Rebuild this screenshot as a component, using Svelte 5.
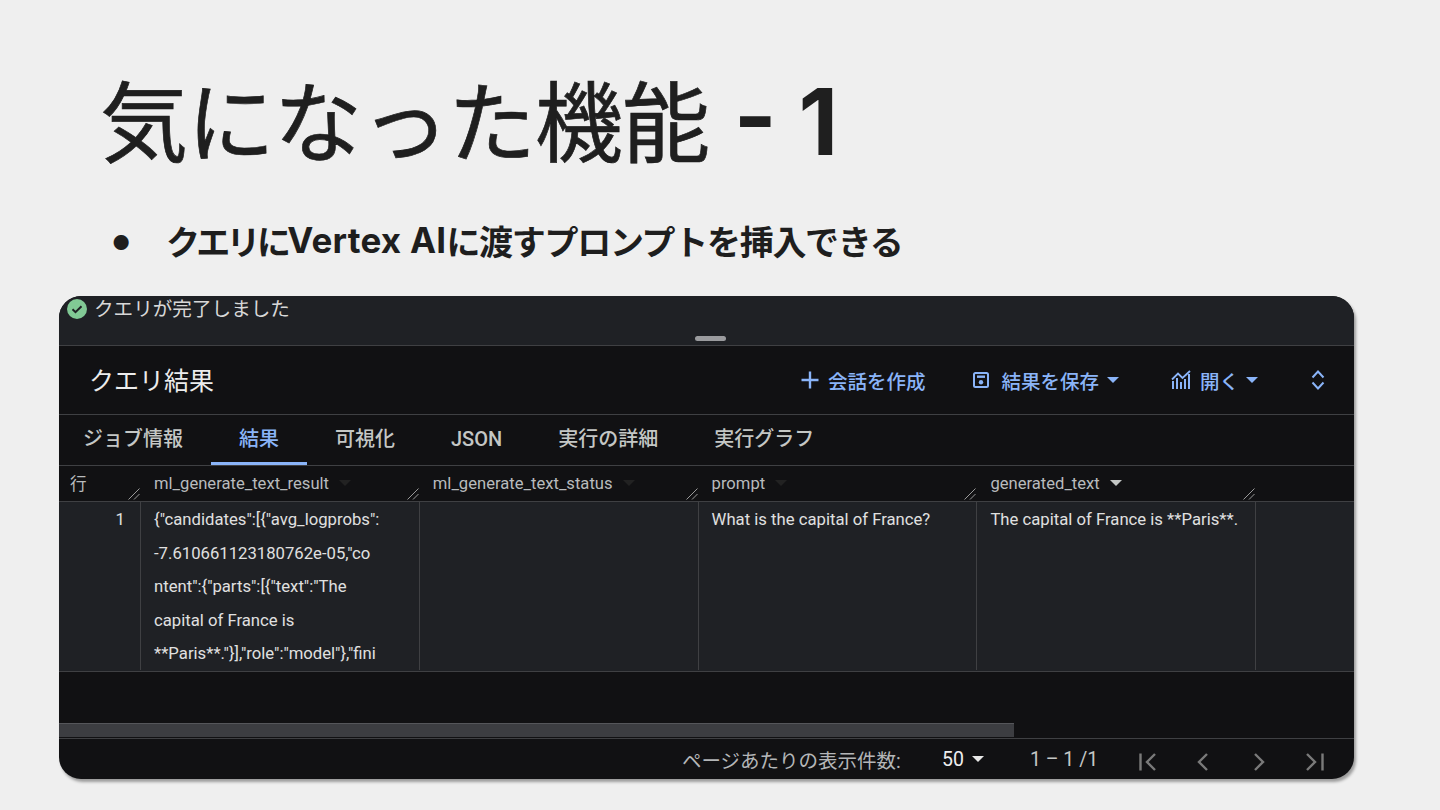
<script>
  const tabs = ['ジョブ情報', '結果', '可視化', 'JSON', '実行の詳細', '実行グラフ'];
  const cols = [
    { name: 'ml_generate_text_result', dim: true },
    { name: 'ml_generate_text_status', dim: true },
    { name: 'prompt', dim: true },
    { name: 'generated_text', dim: false }
  ];
</script>

{#snippet handle()}
  <svg class="resize" viewBox="0 0 12 12" width="12" height="12"><path d="M.5 11.500L11.500.5M6 11.500l5.500-5.500" stroke="#9a9a9a" stroke-width="1" fill="none"/></svg>
{/snippet}

<div class="slide">
  <h1><span class="jp">気になった機能</span> <span class="num1">- 1</span></h1>
  <div class="bullet"><span class="dot">●</span><span class="b1">クエリに</span><span class="b2">Vertex AI</span><span class="b3">に渡すプロンプトを挿入できる</span></div>

  <div class="card">
    <div class="status">
      <div class="statusline">
        <svg class="check" viewBox="0 0 20 20" width="20" height="20"><circle cx="10" cy="10" r="10" fill="#81c995"/><path d="M5.500 10.200l3 3 6-6" fill="none" stroke="#1f2125" stroke-width="2"/></svg>
        <span class="stext">クエリが完了しました</span>
      </div>
      <div class="grip"></div>
    </div>

    <div class="head">
      <div class="htitle">クエリ結果</div>
      <div class="actions">
        <div class="act a1">
          <svg viewBox="0 0 18 18" width="18" height="18"><path d="M9 .5v17M.5 9h17" stroke="#8ab4f8" stroke-width="2.400" fill="none"/></svg>
          <span>会話を作成</span>
        </div>
        <div class="act a2">
          <svg viewBox="0 0 18 18" width="18" height="18"><rect x="2" y="2" width="14" height="14" rx="1.500" fill="none" stroke="#8ab4f8" stroke-width="2"/><rect x="5" y="4.500" width="8" height="2.400" fill="#8ab4f8"/><circle cx="9" cy="11.300" r="2.200" fill="#8ab4f8"/></svg>
          <span>結果を保存</span><i class="caret blue"></i>
        </div>
        <div class="act a3">
          <svg viewBox="0 0 21 20" width="21" height="20"><path d="M2 19v-8M6 19V8M10 19v-7M14 19V9M18 19V4" stroke="#8ab4f8" stroke-width="2" fill="none"/><path d="M1 9.500L7 3.500l4.500 4.500L19 1" stroke="#8ab4f8" stroke-width="1.800" fill="none"/></svg>
          <span>開く</span><i class="caret blue"></i>
        </div>
        <svg class="expand" viewBox="0 0 14 24" width="14" height="24"><path d="M1.500 9.500L7 3.500l5.500 6M1.500 14.500L7 20.500l5.500-6" stroke="#8ab4f8" stroke-width="2" fill="none"/></svg>
      </div>
    </div>

    <div class="tabs">
      {#each tabs as t, i}
        <div class="tab" class:active={i === 1}>{t}</div>
      {/each}
    </div>

    <div class="thead">
      <div class="th first"><span class="rowlabel">行</span>{@render handle()}</div>
      {#each cols as c}
        <div class="th col">
          <span>{c.name}</span><i class="caret" class:dim={c.dim}></i>
          {@render handle()}
        </div>
      {/each}
    </div>

    <div class="trow">
      <div class="td first num">1</div>
      <div class="td col json">
        <div>{'{"candidates":[{"avg_logprobs":'}</div>
        <div>-7.610661123180762e-05,"co</div>
        <div>{'ntent":{"parts":[{"text":"The'}</div>
        <div>capital of France is</div>
        <div>{'**Paris**."}],"role":"model"},"fini'}</div>
      </div>
      <div class="td col"></div>
      <div class="td col cell">What is the capital of France?</div>
      <div class="td col cell">The capital of France is **Paris**.</div>
    </div>

    <div class="spacer"></div>
    <div class="scroll"><div class="thumb"></div></div>

    <div class="foot">
      <span class="perpage">ページあたりの表示件数:</span>
      <span class="size">50</span><i class="caret white"></i>
      <span class="range">1 – 1 /1</span>
      <svg viewBox="0 0 20 20" width="20" height="20" class="pg p1"><path d="M2.500 1.500v17M17 2L9 10l8 8" stroke="#7a7a7a" stroke-width="2.400" fill="none"/></svg>
      <svg viewBox="0 0 20 20" width="20" height="20" class="pg p2"><path d="M15 2l-8 8 8 8" stroke="#7a7a7a" stroke-width="2.400" fill="none"/></svg>
      <svg viewBox="0 0 20 20" width="20" height="20" class="pg p3"><path d="M5 2l8 8-8 8" stroke="#7a7a7a" stroke-width="2.400" fill="none"/></svg>
      <svg viewBox="0 0 20 20" width="20" height="20" class="pg p4"><path d="M2 2l8 8-8 8M17.500 1.500v17" stroke="#7a7a7a" stroke-width="2.400" fill="none"/></svg>
    </div>
  </div>
</div>

<style>
  :global(body) { margin: 0; background: #efefef; }
  .slide {
    width: 1440px; height: 810px; box-sizing: border-box; overflow: hidden;
    background: #efefef; color: #1e1e1e;
    font-family: Roboto, "Noto Sans CJK JP", sans-serif;
    display: flex; flex-direction: column; padding-top: 68px;
  }
  h1 {
    margin: 0 0 0 100px; height: 108px; flex: none; font-size: 88px; line-height: 108px; font-weight: 400;
    font-family: Inter, "Noto Sans CJK JP", sans-serif; color: #1f1f1f; white-space: nowrap;
  }
  .jp { letter-spacing: -1px; -webkit-text-stroke: 0.7px #1f1f1f; }
  .num1 { font-weight: 700; font-size: 92px; }
  .bullet {
    margin: 36px 0 0 112px; display: flex; align-items: center; height: 56px; flex: none;
    font-weight: 700; font-family: Inter, "Noto Sans CJK JP", sans-serif; white-space: nowrap;
  }
  .dot { width: 55px; font-size: 20px; font-weight: 400; position: relative; top: 3px; flex: none; margin-right: -1px; }
  .b1 { font-size: 34px; letter-spacing: -3.700px; }
  .b2 { font-size: 35px; letter-spacing: 0.25px; }
  .b3 { font-size: 34px; letter-spacing: -1.300px; }
  .card {
    margin: 28px 0 0 59px; width: 1295px; height: 483px; box-sizing: border-box; flex: none;
    background: #111113; border-radius: 22px; overflow: hidden;
    box-shadow: 2px 3px 3px rgba(0,0,0,.35);
    display: flex; flex-direction: column; color: #e3e3e3;
  }
  .status { height: 49px; background: #1f2125; border-bottom: 1px solid #3f4043; position: relative; flex: none; }
  .statusline { display: flex; align-items: center; height: 24px; padding: 0 0 0 8px; gap: 7px; font-size: 19.600px; color: #d8d8d8; }
  .stext { margin-top: -2px; }
  .check { flex: none; margin-top: 1px; }
  .grip { position: absolute; left: 636px; top: 40px; width: 31px; height: 5px; border-radius: 3px; background: #9a9b9e; }
  .head { height: 68px; display: flex; align-items: center; border-bottom: 1px solid #3f4043; flex: none; }
  .htitle { margin: -2px 0 0 30px; font-size: 25px; color: #ececec; }
  .actions { margin-left: auto; display: flex; align-items: center; color: #8ab4f8; font-size: 19.500px; font-weight: 500; padding-right: 29px; }
  .act { display: flex; align-items: center; gap: 9px; }
  .a2 { margin-left: 47px; gap: 11px; }
  .a3 { margin-left: 52px; gap: 8px; }
  .a2 .caret { margin-left: -3px; }
  .a3 .caret { margin-left: -1px; }
  .expand { margin-left: 53px; }
  .caret { display: inline-block; width: 0; height: 0; border-left: 6px solid transparent; border-right: 6px solid transparent; border-top: 6px solid #c4c7c5; margin-left: 10px; }
  .caret.blue { border-top-color: #8ab4f8; }
  .caret.dim { border-top-color: #222; }
  .caret.white { border-top-color: #e8e8e8; margin-left: 8px; }
  .tabs { height: 50px; display: flex; border-bottom: 1px solid #3f4043; flex: none; }
  .tab { padding: 0 28px; height: 50px; line-height: 48px; font-size: 20px; font-weight: 500; color: #c4c7c5; box-sizing: border-box; }
  .tab:first-child { padding-left: 24px; }
  .tab.active { color: #8ab4f8; border-bottom: 3px solid #8ab4f8; }
  .thead { height: 35px; display: flex; border-bottom: 1px solid #3f4043; font-size: 16.600px; color: #b8bbbd; flex: none; }
  .th, .td { box-sizing: border-box; position: relative; }
  .first { width: 82px; flex: none; }
  .col { width: 278.800px; flex: none; padding-left: 13px; }
  .th { display: flex; align-items: center; padding-bottom: 1px; }
  .rowlabel { margin-left: 11px; }
  .resize { position: absolute; right: 1px; bottom: 1px; }
  .trow { height: 169px; display: flex; background: #1f2125; border-bottom: 1px solid #3f4043; font-size: 16.700px; color: #e0e0e0; flex: none; }
  .td { border-right: 1px solid #3f4043; height: 168px; padding-top: 6px; overflow: hidden; }
  .num { text-align: right; padding-right: 15px; line-height: 24px; }
  .json div { height: 33.600px; line-height: 24px; white-space: nowrap; }
  .cell { line-height: 24px; white-space: nowrap; }
  .spacer { height: 51px; flex: none; }
  .scroll { height: 15px; flex: none; border-bottom: 1px solid #3f4043; }
  .thumb { width: 955px; height: 14px; background: #3c3d41; border-top: 1px solid #55565a; box-sizing: border-box; }
  .foot { flex: 1; display: flex; align-items: center; position: relative; font-size: 19.500px; color: #b4b6b8; padding-left: 623px; }
  .perpage { width: 260px; white-space: nowrap; }
  .size { color: #eee; }
  .range { margin-left: 46px; width: 88px; white-space: nowrap; color: #c4c7c5; }
  .pg { position: absolute; top: 13px; }
  .p1 { left: 1079px; } .p2 { left: 1133px; } .p3 { left: 1191px; } .p4 { left: 1246px; }
</style>
